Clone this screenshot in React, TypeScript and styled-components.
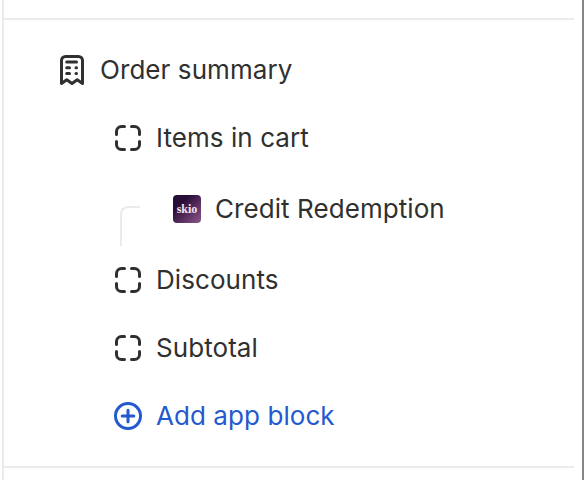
import React from "react";
import styled, { createGlobalStyle } from "styled-components";

const GlobalStyle = createGlobalStyle`
  * { box-sizing: border-box; }
  body { margin: 0; background: #fff; overflow: hidden; }
`;

const Sidebar = styled.aside`
  display: flex;
  width: 584px;
  height: 480px;
  padding: 0 8px 0 2px;
  background: #fff;
  border-right: 2px solid #868686;
`;

const Panel = styled.div`
  flex: 1;
  padding-top: 18px;
  border-left: 2px solid #ebebeb;
`;

const Section = styled.section`
  height: 450px;
  padding: 16px 0;
  border-top: 2px solid #ebebeb;
  border-bottom: 2px solid #ebebeb;
`;

const List = styled.ul`
  margin: 0;
  padding: 0;
  list-style: none;
`;

const Row = styled.li<{ $level: 0 | 1; $accent?: boolean }>`
  display: flex;
  align-items: center;
  gap: 8px;
  height: 68px;
  padding-left: ${(p) => (p.$level === 0 ? 48 : 104)}px;
  color: ${(p) => (p.$accent ? "#2459cf" : "#303030")};
`;

const AppRow = styled.li`
  display: flex;
  align-items: center;
  height: 74px;
  padding-left: 116px;
  color: #303030;
`;

const Branch = styled.span`
  align-self: flex-end;
  width: 20px;
  height: 40px;
  margin-right: 33px;
  border-top: 2px solid #ebebeb;
  border-left: 2px solid #ebebeb;
  border-top-left-radius: 8px;
`;

const Label = styled.span`
  font: 400 26px/40px Inter, sans-serif;
  letter-spacing: 0.07px;
  white-space: nowrap;
`;

const Icon = styled.svg`
  flex: none;
  width: 40px;
  height: 40px;
  fill: none;
  stroke: currentColor;
  stroke-width: 3;
  stroke-linecap: round;
  stroke-linejoin: round;
`;

const AppLogo = styled.span`
  display: flex;
  align-items: center;
  justify-content: center;
  width: 28px;
  height: 28px;
  margin-right: 14px;
  padding-bottom: 1px;
  border-radius: 4px;
  background: linear-gradient(135deg, #240d3a 0%, #2a0e38 30%, #65386a 70%, #8b5687 100%);
  color: #f0e3ef;
  font: 700 12px/14px "Liberation Serif", serif;
`;

const ReceiptIcon = () => (
  <Icon viewBox="0 0 40 40">
    <path d="M9.5 33.5V10.5a4 4 0 0 1 4-4h13a4 4 0 0 1 4 4v23L25.2 29.7 20 33.5l-5.2-3.8Z" />
    <path d="M14.7 12h9.8M14.7 17.8h2.8M24 17.8h.5M14.7 23.6h2.8M24 23.6h.5" />
  </Icon>
);

const BlockIcon = () => (
  <Icon viewBox="0 0 40 40">
    <path d="M8.5 16.5v-3a5 5 0 0 1 5-5h3M23.5 8.5h3a5 5 0 0 1 5 5v3M31.5 23.5v3a5 5 0 0 1-5 5h-3M16.5 31.5h-3a5 5 0 0 1-5-5v-3" />
  </Icon>
);

const PlusIcon = () => (
  <Icon viewBox="0 0 40 40">
    <circle cx="20" cy="20" r="12.5" />
    <path d="M20 14.2v11.6M14.2 20h11.6" />
  </Icon>
);

export default function App() {
  return (
    <>
      <GlobalStyle />
      <Sidebar>
        <Panel>
          <Section>
            <List>
              <Row $level={0}><ReceiptIcon /><Label>Order summary</Label></Row>
              <Row $level={1}><BlockIcon /><Label>Items in cart</Label></Row>
              <AppRow>
                <Branch />
                <AppLogo>skio</AppLogo>
                <Label>Credit Redemption</Label>
              </AppRow>
              <Row $level={1}><BlockIcon /><Label>Discounts</Label></Row>
              <Row $level={1}><BlockIcon /><Label>Subtotal</Label></Row>
              <Row $level={1} $accent><PlusIcon /><Label>Add app block</Label></Row>
            </List>
          </Section>
        </Panel>
      </Sidebar>
    </>
  );
}
